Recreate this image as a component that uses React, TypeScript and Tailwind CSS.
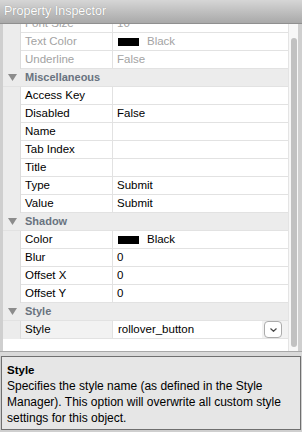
type Row =
  | { kind: 'header'; label: string }
  | { kind: 'prop'; label: string; value?: string; swatch?: boolean; disabled?: boolean; select?: boolean };

const rows: Row[] = [
  { kind: 'prop', label: 'Font Size', value: '10', disabled: true },
  { kind: 'prop', label: 'Text Color', value: 'Black', swatch: true, disabled: true },
  { kind: 'prop', label: 'Underline', value: 'False', disabled: true },
  { kind: 'header', label: 'Miscellaneous' },
  { kind: 'prop', label: 'Access Key' },
  { kind: 'prop', label: 'Disabled', value: 'False' },
  { kind: 'prop', label: 'Name' },
  { kind: 'prop', label: 'Tab Index' },
  { kind: 'prop', label: 'Title' },
  { kind: 'prop', label: 'Type', value: 'Submit' },
  { kind: 'prop', label: 'Value', value: 'Submit' },
  { kind: 'header', label: 'Shadow' },
  { kind: 'prop', label: 'Color', value: 'Black', swatch: true },
  { kind: 'prop', label: 'Blur', value: '0' },
  { kind: 'prop', label: 'Offset X', value: '0' },
  { kind: 'prop', label: 'Offset Y', value: '0' },
  { kind: 'header', label: 'Style' },
  { kind: 'prop', label: 'Style', value: 'rollover_button', select: true },
];

function HeaderRow({ label }: { label: string }) {
  return (
    <div className="flex h-[18px] items-center bg-[#ececec] border-b border-[#e2e2e2]">
      <div className="flex w-[18px] justify-center pl-[1px]">
        <svg width="9" height="7" viewBox="0 0 9 7">
          <path d="M0 0 H9 L4.5 7 Z" fill="#8c8c8c" />
        </svg>
      </div>
      <span className="pl-[4px] text-[11px] font-bold text-[#69737f]">{label}</span>
    </div>
  );
}

function PropRow({ row }: { row: Extract<Row, { kind: 'prop' }> }) {
  const tone = row.disabled ? 'text-[#a3a3a3]' : 'text-black';
  return (
    <div className={`flex h-[18px] ${row.select ? 'bg-[#f2f2f2]' : ''}`}>
      <div className="w-[18px] shrink-0 bg-[#ececec] border-r border-[#dcdcdc]" />
      <div className="flex flex-1 border-b border-[#e2e2e2]">
        <div className={`flex w-[92px] shrink-0 items-center border-r border-[#e2e2e2] pl-[4px] text-[11.5px] ${tone}`}>
          {row.label}
        </div>
        {row.select ? (
          <div className="flex flex-1 items-center">
            <div className="flex h-full w-[149px] items-center bg-white pl-[5px] text-[11.5px] text-black">{row.value}</div>
            <div className="ml-[2px] flex h-[17px] w-[18px] items-center justify-center rounded-[4px] border border-[#ababab] bg-white">
              <svg width="7" height="4" viewBox="0 0 7 4">
                <path d="M0.5 0.5 L3.5 3.3 L6.5 0.5" fill="none" stroke="#4a4a4a" strokeWidth="1.2" />
              </svg>
            </div>
          </div>
        ) : (
          <div className={`flex flex-1 items-center pl-[4px] text-[11.5px] ${tone}`}>
            {row.swatch && <span className="mr-[8px] ml-[1px] inline-block h-[8px] w-[21px] bg-black" />}
            {row.value}
          </div>
        )}
      </div>
    </div>
  );
}

export default function App() {
  return (
    <div className="flex h-[432px] w-[302px] flex-col bg-[#cfcfcf]" style={{ fontFamily: '"Liberation Sans", Arial, sans-serif' }}>
      <div className="relative z-10 flex h-[24px] shrink-0 items-center border-b border-[#8f8f8f] bg-gradient-to-b from-[#d6d6d6] to-[#a9a9a9] pl-[4px] text-[12.5px] text-white [text-shadow:0_0_1px_rgba(0,0,0,0.35)]">
        Property Inspector
      </div>
      <div className="flex h-[327px] shrink-0 pl-[3px] pr-[4px]">
        <div className="flex-1 overflow-hidden bg-white">
          <div className="-mt-[9px]">
            {rows.map((r, i) =>
              r.kind === 'header' ? <HeaderRow key={i} label={r.label} /> : <PropRow key={i} row={r} />
            )}
          </div>
        </div>
        <div className="relative w-[10px] shrink-0 border-l border-[#e4e4e4] bg-[#f7f7f7]">
          <div className="absolute left-[2px] top-[14px] h-[309px] w-[6px] rounded-full bg-[#c1c1c1]" />
        </div>
      </div>
      <div className="h-[5px] shrink-0 border-t border-[#a8a8a8] bg-[#d9d9d9]" />
      <div className="mx-[1px] h-[74px] shrink-0 border border-[#6f6f6f] bg-[#e6e6e6] px-[5px] pt-[5px] text-[12px] leading-[16px] text-black">
        <div className="text-[11.5px] font-bold">Style</div>
        <p>
          Specifies the style name (as defined in the Style Manager). This option will overwrite all custom style settings for this object.
        </p>
      </div>
    </div>
  );
}
